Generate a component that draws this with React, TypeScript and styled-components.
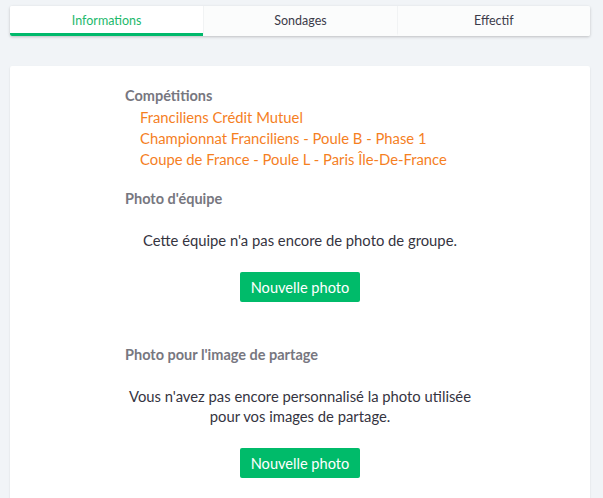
import React from 'react'
import styled, { createGlobalStyle } from 'styled-components'

const GlobalStyle = createGlobalStyle`
  html, body {
    margin: 0;
    padding: 0;
    background: #f1f4f7;
    font-family: Lato, "Open Sans", sans-serif;
  }
`

const tabs = ['Informations', 'Sondages', 'Effectif']

const competitions = [
  'Franciliens Crédit Mutuel',
  'Championnat Franciliens - Poule B - Phase 1',
  'Coupe de France - Poule L - Paris Île-De-France',
]

const App: React.FC = () => {
  const [active, setActive] = React.useState(0)

  return (
    <Page>
      <GlobalStyle />
      <TabBar>
        {tabs.map((t, i) => (
          <Tab key={t} active={i === active} onClick={() => setActive(i)}>
            {t}
          </Tab>
        ))}
      </TabBar>
      <Card>
        <Content>
          <Section>
            <Heading>Compétitions</Heading>
            <LinkList>
              {competitions.map((c) => (
                <CompLink key={c} href="#">{c}</CompLink>
              ))}
            </LinkList>
          </Section>

          <Section>
            <Heading>Photo d'équipe</Heading>
            <Message>Cette équipe n'a pas encore de photo de groupe.</Message>
            <Button>Nouvelle photo</Button>
          </Section>

          <Section>
            <Heading>Photo pour l'image de partage</Heading>
            <Message>
              Vous n'avez pas encore personnalisé la photo utilisée
              <br />
              pour vos images de partage.
            </Message>
            <Button>Nouvelle photo</Button>
          </Section>
        </Content>
      </Card>
    </Page>
  )
}

const Page = styled.div`
  padding: 6px 13px 0 10px;
  display: flex;
  flex-direction: column;
  gap: 30px;
`

const TabBar = styled.div`
  display: grid;
  grid-template-columns: repeat(3, 1fr);
  background: #fbfcfc;
  border-radius: 2px;
  box-shadow: 0 1px 3px rgba(0, 0, 0, 0.22);
  overflow: hidden;
`

const Tab = styled.div<{ active: boolean }>`
  height: 30px;
  box-sizing: border-box;
  display: flex;
  align-items: center;
  justify-content: center;
  font-size: 12.5px;
  color: ${(p) => (p.active ? '#1cb96b' : '#3b3b4a')};
  background: ${(p) => (p.active ? '#ffffff' : '#fbfcfc')};
  border-bottom: 3px solid ${(p) => (p.active ? '#00b96b' : 'transparent')};
  padding-top: 2px;
  cursor: pointer;
  & + & {
    border-left: 1px solid #f1f3f4;
  }
`

const Card = styled.div`
  background: #ffffff;
  border-radius: 2px;
  box-shadow: 0 1px 2px rgba(0, 0, 0, 0.12);
  min-height: 440px;
  padding-top: 20px;
`

const Content = styled.div`
  width: 350px;
  margin: 0 auto;
  display: flex;
  flex-direction: column;
  gap: 19px;
`

const Section = styled.div`
  display: flex;
  flex-direction: column;
`

const Heading = styled.h3`
  margin: 0;
  font-size: 14.5px;
  font-weight: 700;
  color: #77777f;
  line-height: 20px;
`

const LinkList = styled.div`
  display: flex;
  flex-direction: column;
  padding-left: 15px;
  padding-top: 1px;
`

const CompLink = styled.a`
  color: #f5801f;
  text-decoration: none;
  font-size: 14.8px;
  line-height: 21px;
`

const Message = styled.p`
  margin: 21px 0 0;
  text-align: center;
  font-size: 14.8px;
  line-height: 20px;
  color: #35343f;
`

const Button = styled.button`
  align-self: center;
  margin-top: 22px;
  margin-bottom: 24px;
  height: 30px;
  padding: 0 11px;
  border: none;
  border-radius: 2px;
  background: #00bb6a;
  color: #ffffff;
  font-family: Lato, "Open Sans", sans-serif;
  font-size: 14.6px;
  cursor: pointer;
`

export default App
